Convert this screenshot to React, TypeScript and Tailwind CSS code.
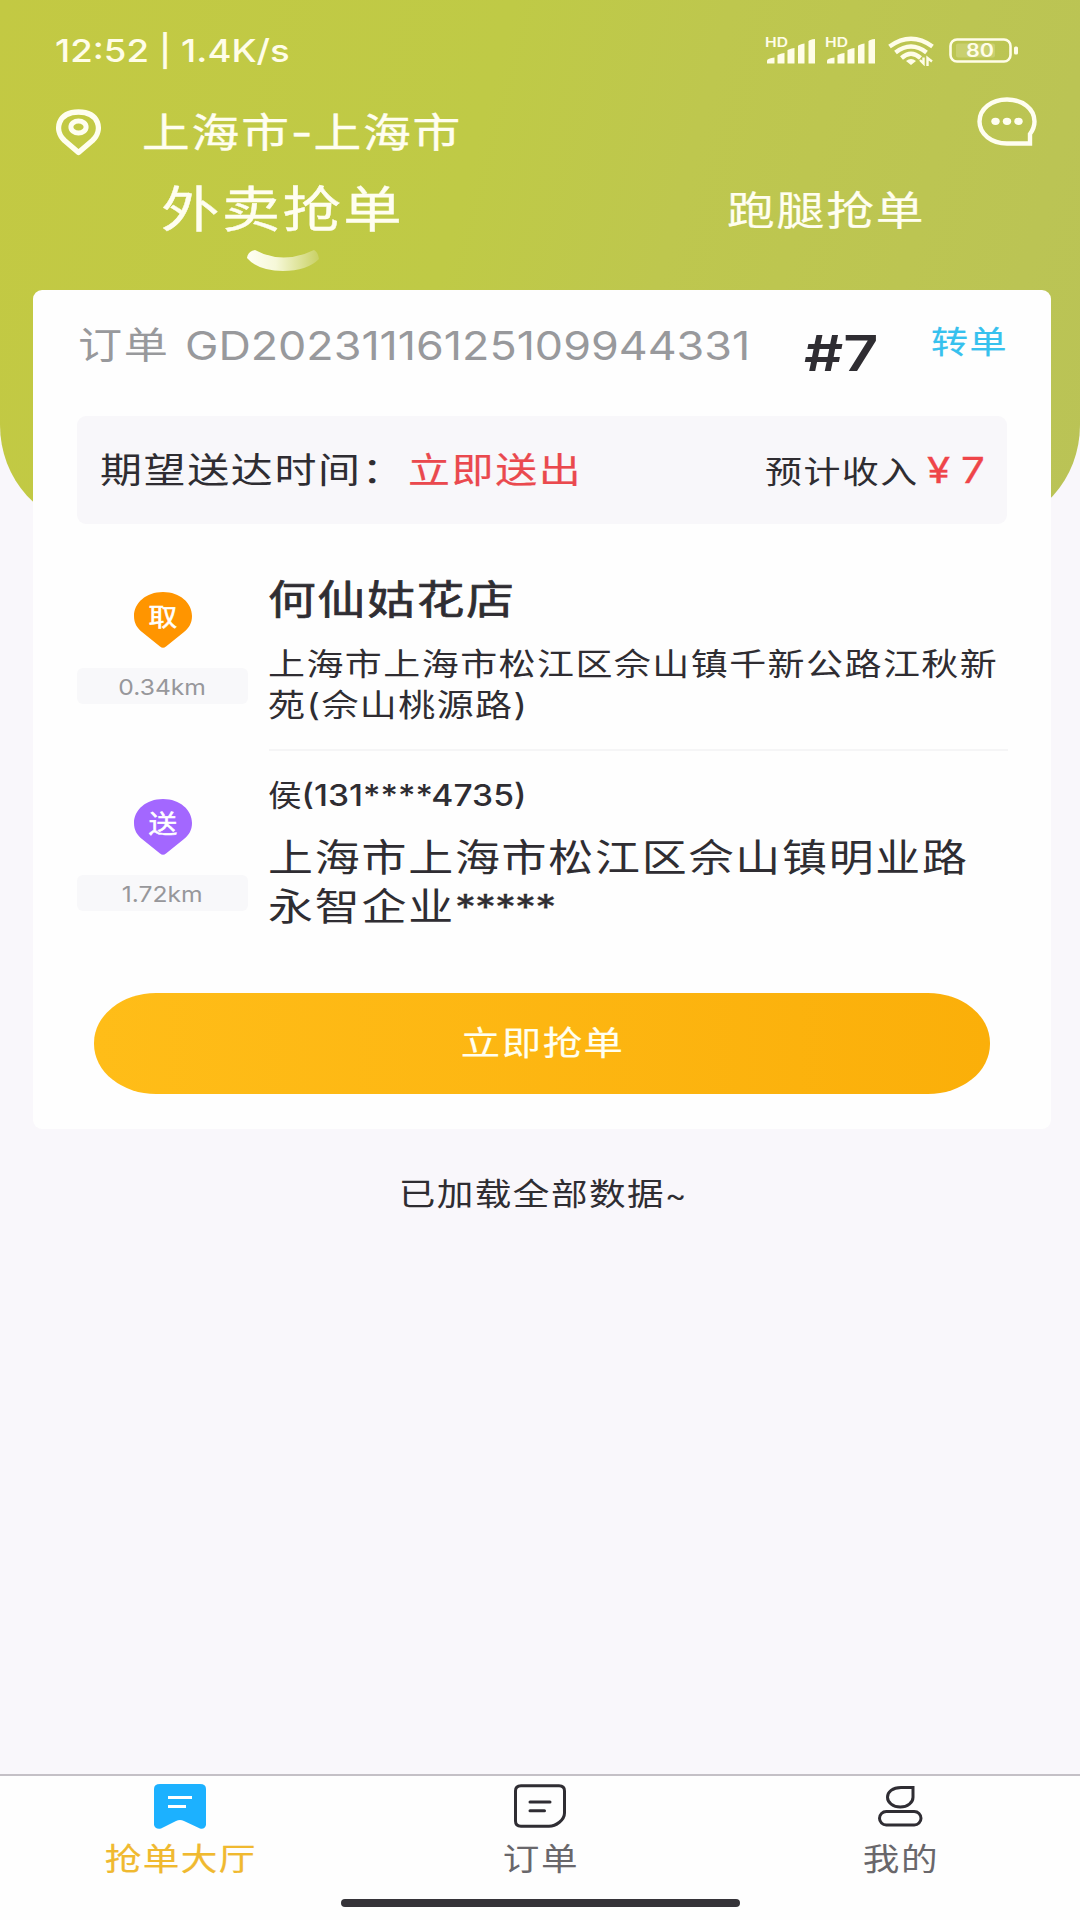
import type { ReactNode } from 'react';
import clsx from 'clsx';

type Tab = {
  label: string;
  icon: ReactNode;
  active?: boolean;
};

type Stop = {
  mark: string;
  color: string;
  distance: string;
};

function Wide({ className, children }: { className?: string; children: ReactNode }) {
  return (
    <span className={clsx('block w-max whitespace-nowrap tracking-[0.04em] scale-x-[1.192]', className)}>
      {children}
    </span>
  );
}

function Signal() {
  return (
    <svg className="-mt-[6px]" width="51" height="34" viewBox="0 -6 51 34" fill="#fffde8">
      <text x="0" y="10" fontSize="13" fontWeight="600" textLength="23" lengthAdjust="spacingAndGlyphs" fontFamily="Inter, sans-serif">
        HD
      </text>
      <path d="M2 26.500V23.500Q2.500 21.500 9.500 20.500V26.500Z" />
      <path d="M12.500 26.500V18.500Q13 17 19.500 16V26.500Z" />
      <path d="M22.500 26.500V13.500Q23 12 29.500 11V26.500Z" />
      <path d="M33 26.500V9Q33.500 7.500 39.500 6.500V26.500Z" />
      <path d="M43.500 26.500V4.500Q44 2.500 50 2V26.500Z" />
    </svg>
  );
}

function Wifi() {
  return (
    <svg width="46" height="30" viewBox="0 0 46 30" fill="none" stroke="#fffde8" strokeWidth="4.400">
      <path d="M1.500 10.500Q23 -5 44.500 10.500" />
      <path d="M7.500 16.500Q23 4.500 38.500 16.500" />
      <path d="M13.500 22Q23 13.500 32.500 22" />
      <path d="M18 25Q23 21 28 25L23 29Z" fill="#fffde8" stroke="none" />
      <path d="M32 24L35.500 27.500V21.500M39.500 30V22L44 25.500" strokeWidth="2.400" />
    </svg>
  );
}

function Battery() {
  return (
    <svg width="70" height="26" viewBox="0 0 70 26" fill="none">
      <rect x="1.500" y="1.500" width="60" height="22" rx="6.500" stroke="#fffde8" strokeWidth="2.600" />
      <rect x="7" y="5.500" width="39" height="14" rx="2" fill="#fffde8" opacity="0.200" />
      <rect x="65" y="8.500" width="4" height="8" rx="1.500" fill="#fffde8" />
      <text x="17" y="19" fontSize="18" fontWeight="600" textLength="28" lengthAdjust="spacingAndGlyphs" fill="#fffde8" fontFamily="Inter, sans-serif">
        80
      </text>
    </svg>
  );
}

function LocationIcon() {
  return (
    <svg width="47" height="47" viewBox="0 0 46 47" fill="none" stroke="#fffef0" strokeLinejoin="round">
      <path d="M23 43.500L9 31.500C-2 21 2.500 3 23 3S48 21 37 31.500Z" strokeWidth="5.400" />
      <ellipse cx="23" cy="18" rx="7.600" ry="6" strokeWidth="5" />
    </svg>
  );
}

function ChatIcon() {
  return (
    <svg width="60" height="50" viewBox="0 0 60 50" fill="none">
      <path
        d="M53 46.500V37C56 33 57.500 29 57.500 24.500C57.500 12 45.500 2.500 30 2.500S2.500 12 2.500 24.500S14.500 46.500 30 46.500Z"
        stroke="#fffef0"
        strokeWidth="4.400"
      />
      <g fill="#fffef0">
        <ellipse cx="18.500" cy="24.300" rx="4.200" ry="3.600" />
        <ellipse cx="30" cy="24.300" rx="4.200" ry="3.600" />
        <ellipse cx="41.500" cy="24.300" rx="4.200" ry="3.600" />
      </g>
    </svg>
  );
}

function HallIcon() {
  return (
    <svg width="52" height="46" viewBox="0 0 52 46" fill="none">
      <path d="M6 0H46Q52 0 52 5V41Q51 45.500 46 44.500L30 37Q26 35 22 37L7 44.500Q1 45.500 0 41V5Q0 0 6 0Z" fill="#1cb1ff" />
      <path d="M14 13.500H38M14 22.500H32" stroke="#fff" strokeWidth="2.800" />
    </svg>
  );
}

function OrderIcon() {
  return (
    <svg width="54" height="46" viewBox="0 0 54 46" fill="none" stroke="#2f2d33" strokeWidth="3">
      <path d="M8 1.800H46Q51.500 1.800 51.500 7V29C51.500 36 43 42.300 36 42.300H8Q2.500 42.300 2.500 37V7Q2.500 1.800 8 1.800Z" />
      <path d="M17 18H37M17 26.700H31.500" strokeLinecap="round" />
    </svg>
  );
}

function MineIcon() {
  return (
    <svg width="46" height="46" viewBox="0 0 46 46" fill="none" stroke="#2f2d33" strokeWidth="3">
      <path d="M36 3.500H24C15.500 3.500 10.500 8 10.500 13.200C10.500 18.500 16 23 23.300 23S36 18.500 36 13.200Z" />
      <rect x="2.500" y="27.500" width="41.500" height="13.500" rx="6.750" />
    </svg>
  );
}

function StopMark({ mark, color, distance }: Stop) {
  return (
    <div className="flex w-[171px] flex-col items-center">
      <div className="relative h-[56px] w-[58px]">
        <svg width="58" height="57" viewBox="0 0 58 57" fill={color}>
          <path d="M29 0C46 0 58 11 58 24C58 31 55 36 50 40L32 54.500Q29 57 26 54.500L8 40C3 36 0 31 0 24C0 11 12 0 29 0Z" />
        </svg>
        <span className="absolute inset-x-0 top-[10px] block scale-x-[1.15] text-center text-[25px] leading-[30px] text-white [-webkit-text-stroke:0.5px]">
          {mark}
        </span>
      </div>
      <div className="mt-5 flex h-[36px] w-full justify-center rounded-md bg-[#f8f8fa]">
        <span className="block scale-x-[1.12] text-[22px] leading-[38px] text-[#97979b]">{distance}</span>
      </div>
    </div>
  );
}

const tabs: Tab[] = [
  { label: '抢单大厅', icon: <HallIcon />, active: true },
  { label: '订单', icon: <OrderIcon /> },
  { label: '我的', icon: <MineIcon /> },
];

function App() {
  return (
    <div className="flex h-[1920px] w-[1080px] flex-col overflow-hidden bg-[#f9f7fb] font-['Inter','Noto_Sans_CJK_SC',sans-serif] text-[#2f2d32]">
      <header className="h-[525px] shrink-0 rounded-b-[92px_100px] bg-[linear-gradient(105deg,#c3c943_0%,#bfca46_42%,#bec74e_60%,#bac356_100%)] text-[#fffef0]">
        <div className="flex h-[101px] items-center justify-between pl-[55px] pr-[61px]">
          <span className="block w-max origin-left scale-x-[1.18] whitespace-nowrap text-[31px] font-medium leading-[40px] text-[#fffde8]">
            12:52 | 1.4K/s
          </span>
          <div className="flex items-center">
            <Signal />
            <div className="w-[9px]" />
            <Signal />
            <div className="w-[12px]" />
            <Wifi />
            <div className="w-[15px]" />
            <Battery />
          </div>
        </div>

        <div className="flex h-[62px] pl-[55px] pr-[43px]">
          <div className="mt-2 w-[87px]">
            <LocationIcon />
          </div>
          <Wide className="origin-left text-[40px] leading-[64px] [-webkit-text-stroke:0.4px]">
            上海市<span className="-mr-[1px]">-</span>上海市
          </Wide>
          <div className="-mt-1 ml-auto">
            <ChatIcon />
          </div>
        </div>

        <div className="flex">
          <div className="w-[566px] pl-[161px]">
            <Wide className="origin-left text-[49px] leading-[94px] [-webkit-text-stroke:0.4px]">外卖抢单</Wide>
            <svg className="-mt-[7px] ml-[85px]" width="74" height="22" viewBox="0 0 74 22">
              <defs>
                <linearGradient id="smile" x1="0" x2="1" y1="0" y2="0">
                  <stop offset="0" stopColor="#fffff4" />
                  <stop offset="0.400" stopColor="#f6f8d8" />
                  <stop offset="1" stopColor="#c9d164" />
                </linearGradient>
              </defs>
              <path d="M1 8Q2 1 9 0Q37 15 68 0Q72 2 73 9Q61 21 37 21Q12 21 1 8Z" fill="url(#smile)" />
            </svg>
          </div>
          <div className="flex-1 pl-[161px]">
            <Wide className="origin-left text-[40px] leading-[95px] [-webkit-text-stroke:0.2px]">跑腿抢单</Wide>
          </div>
        </div>
      </header>

      <section className="relative -mt-[235px] ml-[33px] h-[839px] w-[1018px] shrink-0 rounded-[9px] bg-[#fefefe]">
        <div className="flex h-[126px] pl-[45px] leading-[50px]">
          <div className="w-[107px]">
            <Wide className="mt-[31px] origin-left text-[37px] text-[#98999c]">订单</Wide>
          </div>
          <div className="w-[619px]">
            <span className="mt-[31px] block w-max origin-left scale-x-[1.149] text-[39px] text-[#98999c]">
              GD20231116125109944331
            </span>
          </div>
          <div className="w-[127px]">
            <span className="mt-[38px] block w-max origin-left scale-x-[1.22] text-[50px] font-semibold">#7</span>
          </div>
          <Wide className="mt-[27px] origin-left text-[31px] text-[#36c1ee] [-webkit-text-stroke:0.2px]">转单</Wide>
        </div>

        <div className="ml-[44px] flex h-[108px] w-[930px] items-center rounded-[9px] bg-[#f8f7fa] pl-[23px]">
          <div className="w-[308px]">
            <Wide className="origin-left text-[35.2px]">期望送达时间：</Wide>
          </div>
          <div className="w-[357px]">
            <Wide className="origin-left text-[35.2px] text-[#ea494e] [-webkit-text-stroke:0.2px]">立即送出</Wide>
          </div>
          <div className="mt-1 w-[162px]">
            <Wide className="origin-left text-[31px]">预计收入</Wide>
          </div>
          <div className="flex text-[36px] text-[#ef4549] [-webkit-text-stroke:0.3px]">
            <span className="w-[34px] origin-left scale-x-[1.17]">¥</span>
            <span className="origin-left scale-x-[1.17]">7</span>
          </div>
        </div>

        <div className="flex h-[225px] pl-[44px]">
          <div className="pt-[68px]">
            <StopMark mark="取" color="#ff9500" distance="0.34km" />
          </div>
          <div className="ml-5">
            <Wide className="mt-[51px] origin-left text-[40px] leading-[50px] [-webkit-text-stroke:0.7px]">何仙姑花店</Wide>
            <Wide className="mt-[18px] origin-left text-[31px] leading-[41px]">
              上海市上海市松江区佘山镇千新公路江秋新
              <br />
              苑(佘山桃源路)
            </Wide>
          </div>
        </div>
        <div className="ml-[236px] h-[2px] w-[739px] bg-[#f5f5f6]" />
        <div className="flex h-[242px] pl-[44px]">
          <div className="pt-[48px]">
            <StopMark mark="送" color="#a367ff" distance="1.72km" />
          </div>
          <div className="ml-5">
            <span className="mt-[24px] block w-max origin-left scale-x-[1.12] text-[30px] font-medium leading-[40px]">
              <span className="font-normal">侯</span>(131****4735)
            </span>
            <Wide className="mt-[18px] origin-left text-[37.7px] leading-[49px]">
              上海市上海市松江区佘山镇明业路
              <br />
              永智企业<span className="text-[35px] tracking-[-0.02em] [-webkit-text-stroke:0.4px]">*****</span>
            </Wide>
          </div>
        </div>

        <button className="ml-[61px] flex h-[101px] w-[896px] items-center justify-center rounded-[62px/50px] bg-gradient-to-r from-[#ffbd18] to-[#fbaf09] pl-[2px] text-[#fffff0]">
          <Wide className="text-[33px] [-webkit-text-stroke:0.2px]">立即抢单</Wide>
        </button>
      </section>

      <div className="mt-[40px] flex justify-center pl-[7px]">
        <Wide className="text-[30.7px] leading-[50px]">
          已加载全部数据<span className="text-[27px]">~</span>
        </Wide>
      </div>

      <nav className="mt-auto h-[146px] shrink-0 border-t-2 border-[#c4c0c6] bg-[#fefefe]">
        <div className="grid h-[123px] grid-cols-3">
          {tabs.map((tab) => (
            <div key={tab.label} className="flex flex-col items-center pt-2">
              <div className="h-[46px]">{tab.icon}</div>
              <Wide className={clsx('mt-[7px] ml-[2px] text-[30.7px] leading-[44px]', tab.active ? 'text-[#f0b92f] [-webkit-text-stroke:0.2px]' : 'text-[#69676b]')}>
                {tab.label}
              </Wide>
            </div>
          ))}
        </div>
        <div className="mx-auto h-[8px] w-[399px] rounded-full bg-[#353338]" />
      </nav>
    </div>
  );
}

export default App;
